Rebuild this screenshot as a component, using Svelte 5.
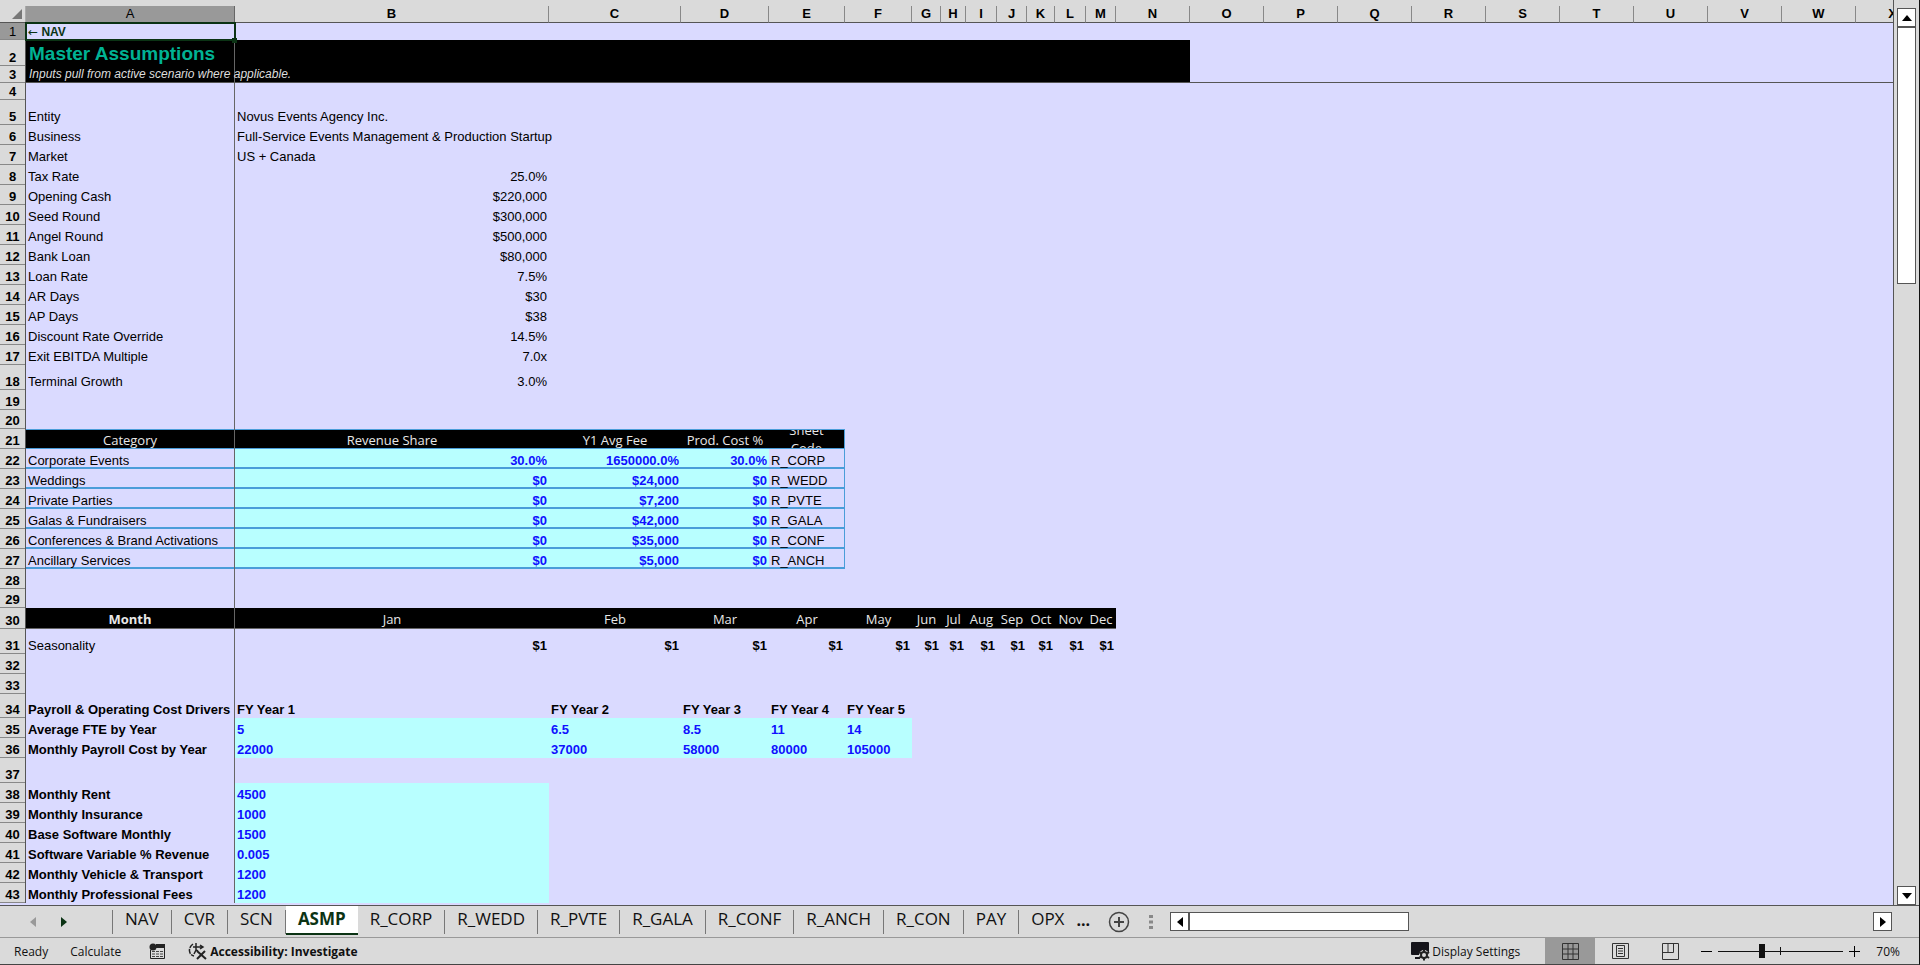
<script lang="ts">
type Cell = { text?: string; cls?: string };

const columns = [
	{ name: "A", width: 209 },
	{ name: "B", width: 314 },
	{ name: "C", width: 132 },
	{ name: "D", width: 88 },
	{ name: "E", width: 76 },
	{ name: "F", width: 67 },
	{ name: "G", width: 29 },
	{ name: "H", width: 25 },
	{ name: "I", width: 31 },
	{ name: "J", width: 30 },
	{ name: "K", width: 28 },
	{ name: "L", width: 31 },
	{ name: "M", width: 30 },
	{ name: "N", width: 74 },
	..."OPQRSTUVWX".split("").map((name) => ({ name, width: 74 })),
];
const tableWidth = 26 + columns.reduce((sum, column) => sum + column.width, 0);

// Rows that differ from the default height
const rowHeights: Record<number, number> = { 1: 17, 2: 26, 3: 17, 4: 17, 5: 25, 18: 25, 20: 19, 29: 19, 30: 21, 31: 25, 34: 24, 37: 25 };
const rows = Array.from({ length: 43 }, (_, i) => i + 1);

const cells: Record<string, Cell> = {};

function put(ref: string, text: string, cls = "") {
	cells[ref] = { text, cls: `${cells[ref]?.cls ?? ""} ${cls}` };
}

function fill(from: string, to: string, firstRow: number, lastRow: number, cls: string) {
	for (let row = firstRow; row <= lastRow; row++) {
		for (const { name } of columns) {
			if (name >= from && name <= to) {
				cells[name + row] = { text: "", cls };
			}
		}
	}
}

fill("A", "N", 2, 3, "black");
fill("A", "E", 21, 21, "black head lined-top");
fill("A", "E", 22, 27, "lined");
fill("B", "D", 22, 27, "lined input");
fill("A", "M", 30, 30, "black head underlined");
fill("B", "F", 35, 36, "input");
fill("B", "B", 38, 43, "input");

put("A2", "Master Assumptions", "title");
put("A3", "Inputs pull from active scenario where applicable.", "subtitle");

const settings = [
	["Entity", "Novus Events Agency Inc."],
	["Business", "Full-Service Events Management & Production Startup"],
	["Market", "US + Canada"],
	["Tax Rate", "25.0%"],
	["Opening Cash", "$220,000"],
	["Seed Round", "$300,000"],
	["Angel Round", "$500,000"],
	["Bank Loan", "$80,000"],
	["Loan Rate", "7.5%"],
	["AR Days", "$30"],
	["AP Days", "$38"],
	["Discount Rate Override", "14.5%"],
	["Exit EBITDA Multiple", "7.0x"],
	["Terminal Growth", "3.0%"],
];
settings.forEach(([label, value], i) => {
	put(`A${i + 5}`, label);
	put(`B${i + 5}`, value, i > 2 ? "right" : "");
});

["Category", "Revenue Share", "Y1 Avg Fee", "Prod. Cost %", "Sheet Code"].forEach((text, i) => {
	put(`${columns[i].name}21`, text, i === 4 ? "wrapped edge" : "");
});

const categories = [
	["Corporate Events", "30.0%", "1650000.0%", "30.0%", "R_CORP"],
	["Weddings", "$0", "$24,000", "$0", "R_WEDD"],
	["Private Parties", "$0", "$7,200", "$0", "R_PVTE"],
	["Galas & Fundraisers", "$0", "$42,000", "$0", "R_GALA"],
	["Conferences & Brand Activations", "$0", "$35,000", "$0", "R_CONF"],
	["Ancillary Services", "$0", "$5,000", "$0", "R_ANCH"],
];
categories.forEach((values, i) => {
	values.forEach((text, j) => {
		put(`${columns[j].name}${i + 22}`, text, j === 4 ? "edge" : j > 0 ? "right" : "");
	});
});

["Month", "Jan", "Feb", "Mar", "Apr", "May", "Jun", "Jul", "Aug", "Sep", "Oct", "Nov", "Dec"].forEach((text, i) => {
	put(`${columns[i].name}30`, text, i === 0 ? "bold" : "");
	put(`${columns[i].name}31`, i === 0 ? "Seasonality" : "$1", i > 0 ? "right bold" : "");
});

const drivers = [
	["Payroll & Operating Cost Drivers", "FY Year 1", "FY Year 2", "FY Year 3", "FY Year 4", "FY Year 5"],
	["Average FTE by Year", "5", "6.5", "8.5", "11", "14"],
	["Monthly Payroll Cost by Year", "22000", "37000", "58000", "80000", "105000"],
	[],
	["Monthly Rent", "4500"],
	["Monthly Insurance", "1000"],
	["Base Software Monthly", "1500"],
	["Software Variable % Revenue", "0.005"],
	["Monthly Vehicle & Transport", "1200"],
	["Monthly Professional Fees", "1200"],
];
drivers.forEach((values, i) => {
	values.forEach((text, j) => put(`${columns[j].name}${i + 34}`, text, "bold"));
});

const sheets = ["NAV", "CVR", "SCN", "ASMP", "R_CORP", "R_WEDD", "R_PVTE", "R_GALA", "R_CONF", "R_ANCH", "R_CON", "PAY", "OPX"];
let activeSheet = "ASMP";
let zoom = 34;
</script>

<div class="window">
	<div class="main">
		<div class="sheet">
			<table style="width: {tableWidth}px">
				<colgroup>
					<col style="width: 26px" />
					{#each columns as column}
						<col style="width: {column.width}px" />
					{/each}
				</colgroup>
				<thead>
					<tr>
						<th class="corner"><svg width="10" height="10" viewBox="0 0 10 10"><path d="M10 0V10H0z" fill="#777" /></svg></th>
						{#each columns as column}
							<th scope="col" class:selected={column.name === "A"} class:frozen={column.name === "A"}>{column.name}</th>
						{/each}
					</tr>
				</thead>
				<tbody>
					{#each rows as row}
						<tr style="height: {rowHeights[row] ?? 20}px" class:frozen-row={row === 3}>
							<th scope="row" class:selected={row === 1}>{row}</th>
							{#each columns as column}
								{@const cell = cells[column.name + row]}
								<td class={cell?.cls ?? ""} class:frozen={column.name === "A"} class:cursor={column.name + row === "A1"}>
									{#if column.name + row === "A1"}
										<a href="#nav"><span class="arrow">←</span> <b>NAV</b></a>
										<span class="handle"></span>
									{:else if cell?.cls?.includes("wrapped")}
										<div class="clip">{cell.text}</div>
									{:else}
										{cell?.text ?? ""}
									{/if}
								</td>
							{/each}
						</tr>
					{/each}
				</tbody>
			</table>
		</div>
		<div class="vscroll">
			<button aria-label="Scroll up"><svg width="10" height="6" viewBox="0 0 10 6"><path d="M5 0L10 6H0z" /></svg></button>
			<div class="vthumb"></div>
			<div class="space"></div>
			<button aria-label="Scroll down"><svg width="10" height="6" viewBox="0 0 10 6"><path d="M0 0H10L5 6z" /></svg></button>
		</div>
	</div>

	<div class="tabs">
		<div class="tab-nav">
			<button class="plain" aria-label="Previous sheets"><svg width="6" height="10" viewBox="0 0 6 10"><path d="M6 0V10L0 5z" fill="#999" /></svg></button>
			<button class="plain" aria-label="Next sheets"><svg width="6" height="10" viewBox="0 0 6 10"><path d="M0 0V10L6 5z" fill="#0b3314" /></svg></button>
		</div>
		{#each sheets as sheet}
			<button class="tab" class:active={sheet === activeSheet} on:click={() => (activeSheet = sheet)}>{sheet}</button>
		{/each}
		<button class="plain more">...</button>
		<button class="plain add" aria-label="New sheet">
			<svg width="22" height="22" viewBox="0 0 22 22" fill="none" stroke="#444" stroke-width="2"><circle cx="11" cy="11" r="9.500" stroke-width="1.5" /><path d="M11 6V16M6 11H16" /></svg>
		</button>
		<svg class="grip" width="4" height="14" viewBox="0 0 4 14" fill="#888"><path d="M0 0h4v3H0zM0 5.500h4v3H0zM0 11h4v3H0z" /></svg>
		<div class="hscroll">
			<button aria-label="Scroll left"><svg width="6" height="10" viewBox="0 0 6 10"><path d="M6 0V10L0 5z" /></svg></button>
			<div class="hthumb"></div>
			<div class="space"></div>
			<button aria-label="Scroll right"><svg width="6" height="10" viewBox="0 0 6 10"><path d="M0 0V10L6 5z" /></svg></button>
		</div>
	</div>

	<div class="status">
		<span class="ready">Ready</span>
		<button class="plain calculate">Calculate</button>
		<button class="plain macro" aria-label="Record macro">
			<svg width="16" height="16" viewBox="0 0 16 16"><path d="M3.500 2.500H15.500V15.500H1.500V7" fill="none" stroke="#222" /><path d="M7 1H16V5H7z" fill="#222" /><circle cx="4" cy="4" r="3.500" fill="#222" /><path d="M3 8.500H14M3 11H14M3 13.500H14" stroke="#444" stroke-width="1.200" stroke-dasharray="3 1" /></svg>
		</button>
		<button class="plain access">
			<svg width="19" height="18" viewBox="0 0 19 18" fill="none" stroke="#222" stroke-width="1.500"><path d="M5 2Q1 5 1.500 9T6 14" stroke-dasharray="5 1" /><path d="M5 5H14M12 3L15 5L12 7M8 1V8L6 12M8 8L10 9" /><path d="M9 9L18 17M17 9L9 17" stroke-width="2" /></svg>
			<b>Accessibility: Investigate</b>
		</button>
		<div class="space"></div>
		<button class="plain display">
			<svg width="19" height="19" viewBox="0 0 19 19"><path d="M1 0H17Q18 0 18 1V13H1Q0 13 0 12V1Q0 0 1 0zM4 15H9V17H4z" fill="#15141a" /><circle cx="13" cy="13" r="5" fill="#dadada" /><circle cx="13" cy="13" r="3" fill="none" stroke="#222" stroke-width="2" /><path d="M13 7.500V10M13 16V18.500M8 10L10 11.500M16 14.500L18 16M18 10L16 11.500M10 14.500L8 16" stroke="#222" stroke-width="2" /></svg>
			<span>Display Settings</span>
		</button>
		<button class="plain view current" aria-label="Normal view">
			<svg width="17" height="17" viewBox="0 0 17 17" fill="none" stroke="#333"><path d="M.5.5H16.500V16.500H.5zM6 .5V16.500M11 .5V16.500M.5 6H16.500M.5 11H16.500" /></svg>
		</button>
		<button class="plain view" aria-label="Page layout">
			<svg width="17" height="16" viewBox="0 0 17 16" fill="none" stroke="#333"><path d="M.5.5H16.500V15.500H.5zM4.500 2.500H12.500V13.500H4.500zM6 5.500H11M6 8H11M6 10.500H11" /></svg>
		</button>
		<button class="plain view" aria-label="Page break preview">
			<svg width="17" height="17" viewBox="0 0 17 17" fill="none" stroke="#333"><path d="M.5.5H16.500V16.500H.5zM.5 9.500H11.500V.5M6 .5V9.500" /></svg>
		</button>
		<button class="plain step" aria-label="Zoom out"><svg width="11" height="11" viewBox="0 0 11 11"><path d="M0 5H11V6H0z" /></svg></button>
		<input type="range" aria-label="Zoom" min="0" max="100" bind:value={zoom} />
		<button class="plain step" aria-label="Zoom in"><svg width="11" height="11" viewBox="0 0 11 11"><path d="M0 5H11V6H0zM5 0H6V11H5z" /></svg></button>
		<button class="plain percent">70%</button>
	</div>
</div>

<style>
	:global(body) {
		margin: 0;
		background: #dadada;
	}

	.window {
		display: flex;
		flex-direction: column;
		box-sizing: border-box;
		height: 100vh;
		border-right: 1px solid #111;
		border-bottom: 1px solid #444;
		background: #dadada;
		font-family: "Open Sans", "Noto Sans", sans-serif;
		font-size: 12px;
		color: #111;
	}

	.main {
		display: flex;
		flex: 1;
		min-height: 0;
	}

	.sheet {
		flex: 1;
		min-width: 0;
		overflow: hidden;
		border-right: 1px solid #555;
		background: linear-gradient(#dadada 22px, #555 22px, #555 23px, #dadaff 23px);
	}

	table {
		table-layout: fixed;
		border-collapse: separate;
		border-spacing: 0;
		padding-top: 6px;
		font-family: "Liberation Sans", Arial, sans-serif;
		font-size: 13px;
		line-height: 16px;
		color: #000;
	}

	th,
	td {
		box-sizing: border-box;
		padding: 0;
		vertical-align: bottom;
		white-space: nowrap;
	}

	thead th {
		height: 17px;
		border-right: 1px solid #888;
		border-bottom: 1px solid #555;
		background: #dadada;
	}

	thead th.corner {
		padding-right: 3px;
		padding-bottom: 3px;
		border-right-color: #aaa;
		line-height: 10px;
		text-align: right;
	}

	.corner svg {
		display: block;
		margin-left: auto;
	}

	tbody th {
		border-right: 1px solid #555;
		background: #dadada;
		box-shadow: inset 0 -1px #888;
	}

	thead th.selected,
	tbody th.selected {
		background: #999;
		font-weight: normal;
	}

	td {
		padding: 0 2px;
	}

	.frozen {
		border-right: 1px solid #666;
	}

	.frozen-row td {
		border-bottom: 1px solid #555;
	}

	.black {
		background: #000;
	}

	.title {
		color: #00b294;
		font-size: 19px;
		font-weight: bold;
		line-height: 24px;
		padding-left: 3px;
	}

	.subtitle {
		color: #ddd;
		font-size: 12px;
		font-style: italic;
		padding-left: 3px;
	}

	.head {
		color: #e8e8e8;
		font-family: "Open Sans", "Noto Sans", sans-serif;
		font-size: 13px;
		text-align: center;
		padding: 0;
	}

	.lined-top {
		box-shadow: inset 0 1px #4a9dd9, inset 0 -1px #4a9dd9;
		padding-bottom: 1px;
	}

	.lined {
		box-shadow: inset 0 -2px #4a9dd9;
	}

	.underlined {
		box-shadow: inset 0 -1px #666;
		padding-bottom: 2px;
	}

	.edge {
		border-right: 1px solid #4a9dd9;
	}

	.clip {
		display: flex;
		align-items: center;
		height: 18px;
		padding: 0 16px;
		overflow: hidden;
		line-height: 18px;
		white-space: normal;
	}

	.input {
		background: #b8ffff;
		color: #1010ff;
		font-weight: bold;
	}

	.right {
		text-align: right;
	}

	.bold {
		font-weight: bold;
	}

	.cursor {
		position: relative;
		outline: 2px solid #0b3314;
		outline-offset: -1px;
		font-size: 12px;
	}

	.cursor a {
		color: #0b3314;
		text-decoration: none;
	}

	.arrow {
		font-family: "DejaVu Sans", sans-serif;
	}

	.handle {
		position: absolute;
		right: -3px;
		bottom: -3px;
		width: 5px;
		height: 5px;
		background: #0b3314;
	}

	button {
		display: flex;
		align-items: center;
		justify-content: center;
		box-sizing: border-box;
		width: 19px;
		height: 19px;
		padding: 0;
		border: 1px solid #555;
		background: #fff;
		font: inherit;
		color: inherit;
	}

	button.plain {
		width: auto;
		height: auto;
		border: none;
		background: none;
	}

	.vscroll {
		display: flex;
		flex-direction: column;
		width: 19px;
		padding: 8px 3px 0 3px;
	}

	.vthumb {
		box-sizing: border-box;
		height: 257px;
		border: 1px solid #555;
		background: #fff;
	}

	.space {
		flex: 1;
	}

	.tabs {
		display: flex;
		align-items: center;
		box-sizing: border-box;
		height: 33px;
		padding-right: 27px;
		border-top: 1px solid #555;
		border-bottom: 1px solid #999;
	}

	.tab-nav {
		display: flex;
		box-sizing: border-box;
		gap: 25px;
		width: 113px;
		height: 24px;
		padding-left: 30px;
		border-right: 1px solid #777;
	}

	.tab {
		width: auto;
		height: 24px;
		padding: 0 12px 5px;
		border: none;
		border-right: 1px solid #777;
		background: none;
		font-size: 17px;
		line-height: 20px;
	}

	.tab.active {
		align-self: flex-start;
		height: 29px;
		padding: 0 12px 2px;
		border: none;
		border-bottom: 2px solid #0b3314;
		background: #fff;
		color: #0b3314;
		font-weight: bold;
	}

	.tabs .more {
		padding: 0 18px 4px 0;
		font-size: 16px;
		font-weight: bold;
	}

	/* no divider between the last sheet and the overflow button */
	.tab:has(+ .more) {
		border-right: none;
	}

	.grip {
		margin: 0 17px 0 19px;
	}

	.hscroll {
		display: flex;
		flex: 1;
	}

	.hthumb {
		width: 220px;
		border: 1px solid #555;
		background: #fff;
		box-sizing: border-box;
	}

	.status {
		display: flex;
		align-items: center;
		height: 26px;
		padding-left: 14px;
		padding-right: 19px;
	}

	.status .calculate {
		margin-left: 22px;
	}

	.status .macro {
		margin-left: 28px;
	}

	.status .access {
		gap: 3px;
		margin-left: 23px;
	}

	.status .display {
		gap: 2px;
		margin-right: 25px;
	}

	.status .view {
		width: 50px;
		height: 26px;
	}

	.status .current {
		background: #999;
	}

	.status .step {
		margin: 0 6px;
	}

	input[type="range"] {
		appearance: none;
		width: 125px;
		height: 14px;
		margin: 0;
		background:
			linear-gradient(#111, #111) center / 100% 1px no-repeat,
			linear-gradient(#111, #111) center / 1px 8px no-repeat;
	}

	input[type="range"]::-webkit-slider-thumb {
		appearance: none;
		width: 6px;
		height: 14px;
		background: #111;
	}

	.status .percent {
		margin-left: 10px;
	}
</style>
